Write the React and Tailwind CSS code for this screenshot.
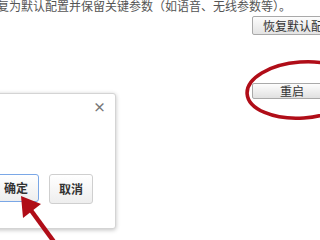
export default function App() {
  const font = { fontFamily: '"Noto Sans CJK SC", "Noto Sans", sans-serif' };

  return (
    <div className="relative w-[320px] h-[240px] overflow-hidden bg-white" style={font}>
      {/* page content */}
      <div className="flex flex-col">
        <p className="ml-[-15px] mt-[-1px] whitespace-nowrap text-[12px] leading-[14px] text-[#555]">
          恢复为默认配置并保留关键参数（如语音、无线参数等）。
        </p>
        <div className="ml-[252px] mt-[3px] flex">
          <button className="h-[19px] w-[96px] shrink-0 rounded-[2px] border border-[#a9a9a9] bg-gradient-to-b from-[#fdfdfd] to-[#e3e3e3] pl-[10px] text-left text-[12px] leading-[17px] text-[#333]">
            恢复默认配置
          </button>
        </div>
        <div className="ml-[252px] mt-[48px] flex">
          <button className="h-[16px] w-[80px] shrink-0 rounded-[2px] border border-[#a9a9a9] bg-gradient-to-b from-[#fdfdfd] to-[#e1e1e1] text-[12px] leading-[14px] text-[#333]">
            重启
          </button>
        </div>
      </div>

      {/* confirm dialog */}
      <div className="absolute left-[-60px] top-[93px] flex h-[136px] w-[176px] flex-col rounded-[3px] border border-[#d4d4d4] bg-white shadow-[0_1px_4px_rgba(0,0,0,0.25)]">
        <div className="flex justify-end pr-[9px] pt-[7px]">
          <span className="text-[13px] font-bold leading-[12px] text-[#777]">×</span>
        </div>
        <div className="mt-auto mb-[24px] flex gap-[10px] pl-[36px]">
          <button className="h-[28px] w-[62px] rounded-[3px] border border-[#7aa7e6] bg-gradient-to-b from-white to-[#eeeeee] pl-[26px] text-left text-[12px] font-bold text-[#333]">
            确定
          </button>
          <button className="h-[30px] w-[44px] rounded-[3px] border border-[#cfcfcf] bg-gradient-to-b from-white to-[#eeeeee] text-[12px] font-bold text-[#333]">
            取消
          </button>
        </div>
      </div>

      {/* red annotations */}
      <svg className="pointer-events-none absolute left-0 top-0" width="320" height="240" viewBox="0 0 320 240">
        <ellipse cx="302" cy="90" rx="55" ry="28" fill="none" stroke="#b00d18" strokeWidth="3.6" transform="rotate(-4 302 90)" />
        <line x1="30" y1="209" x2="60" y2="250" stroke="#b00d18" strokeWidth="4.5" />
        <polygon points="21,196 23,218 41,204" fill="#b00d18" />
      </svg>
    </div>
  );
}
